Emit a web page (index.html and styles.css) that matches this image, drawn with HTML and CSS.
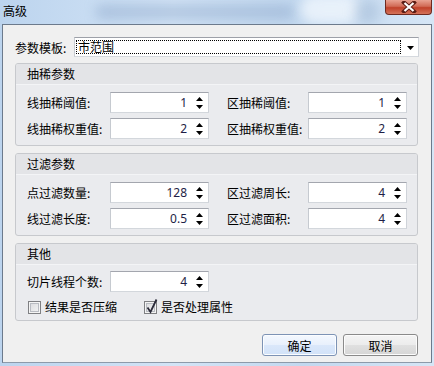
FILE: index.html
```html
<!DOCTYPE html>
<html lang="zh-CN">
<head>
  <meta charset="UTF-8" />
  <meta name="viewport" content="width=device-width, initial-scale=1.0">
  <title>高级</title>
  <link rel="stylesheet" href="styles.css">
</head>
<body>
  <div class="frame">
    <div class="titlebar">
      <span class="blur blur-a"></span>
      <span class="blur blur-b"></span>
      <span class="blur blur-c"></span>
      <span class="title">高级</span>
      <span class="close">
        <svg width="16" height="12" viewBox="0 0 16 12">
          <path d="M3 1.5 L13 10.5 M13 1.5 L3 10.5" stroke="#5a1c14" stroke-width="4" stroke-linecap="square"/>
          <path d="M3.5 2 L12.5 10 M12.5 2 L3.5 10" stroke="#ffffff" stroke-width="2.2"/>
        </svg>
      </span>
    </div>

    <div class="client">
      <div class="template-row">
        <span class="label">参数模板:</span>
        <div class="combo">
          <span class="combo-text">市范围</span>
          <svg class="combo-arrow" width="7" height="4" viewBox="0 0 7 4"><path d="M0 0 H7 L3.5 4 Z" fill="#000"/></svg>
        </div>
      </div>

      <div class="group">
        <div class="group-head">抽稀参数</div>
        <div class="group-body">
          <div class="row">
            <span class="label">线抽稀阈值:</span>
            <div class="spin"><span class="val">1</span><span class="arrows"></span></div>
            <span class="label right">区抽稀阈值:</span>
            <div class="spin"><span class="val">1</span><span class="arrows"></span></div>
          </div>
          <div class="row">
            <span class="label">线抽稀权重值:</span>
            <div class="spin"><span class="val">2</span><span class="arrows"></span></div>
            <span class="label right">区抽稀权重值:</span>
            <div class="spin"><span class="val">2</span><span class="arrows"></span></div>
          </div>
        </div>
      </div>

      <div class="group">
        <div class="group-head">过滤参数</div>
        <div class="group-body">
          <div class="row">
            <span class="label">点过滤数量:</span>
            <div class="spin"><span class="val">128</span><span class="arrows"></span></div>
            <span class="label right">区过滤周长:</span>
            <div class="spin"><span class="val">4</span><span class="arrows"></span></div>
          </div>
          <div class="row">
            <span class="label">线过滤长度:</span>
            <div class="spin"><span class="val">0.5</span><span class="arrows"></span></div>
            <span class="label right">区过滤面积:</span>
            <div class="spin"><span class="val">4</span><span class="arrows"></span></div>
          </div>
        </div>
      </div>

      <div class="group">
        <div class="group-head">其他</div>
        <div class="group-body other">
          <div class="row">
            <span class="label">切片线程个数:</span>
            <div class="spin"><span class="val">4</span><span class="arrows"></span></div>
          </div>
          <div class="checks">
            <label class="check"><span class="box"></span>结果是否压缩</label>
            <label class="check second"><span class="box checked">
              <svg width="13" height="15" viewBox="0 0 13 15"><path d="M2.5 8.5 L5.5 13 L11.5 0.5" fill="none" stroke="#2b2b3a" stroke-width="1.8"/></svg>
            </span>是否处理属性</label>
          </div>
        </div>
      </div>

      <div class="buttons">
        <button class="btn default">确定</button>
        <button class="btn">取消</button>
      </div>
    </div>
  </div>
</body>
</html>
```

FILE: styles.css
```css
html, body { margin: 0; padding: 0; }
body { width: 434px; height: 366px; overflow: hidden; font-family: "Noto Sans CJK SC", "Noto Sans", sans-serif; font-size: 12px; color: #000; background: #c6dbf1; }

.frame { height: 366px; background: linear-gradient(to right, #bcd4ee, #d3e4f6 40%, #c2d8ef 70%, #d6e6f6); }

.titlebar { position: relative; height: 24px; overflow: hidden; }
.title { position: absolute; left: 3px; top: 3px; line-height: 16px; font-size: 12px; }
.blur { position: absolute; border-radius: 10px; filter: blur(6px); }
.blur-a { left: 95px; top: 4px; width: 200px; height: 16px; background: rgba(120, 150, 190, 0.35); }
.blur-b { left: 300px; top: -6px; width: 60px; height: 30px; background: rgba(240, 246, 252, 0.8); border-radius: 30px; }
.blur-c { left: 355px; top: 0; width: 25px; height: 24px; background: rgba(150, 175, 205, 0.4); }
.close {
  position: absolute; left: 385px; top: 0; width: 47px; height: 15px; box-sizing: border-box;
  border: 1px solid #6e2a20; border-top: none; border-radius: 0 0 4px 4px;
  background: linear-gradient(#e9a393, #d16b56 45%, #c0412a 55%, #d4735a);
  display: flex; align-items: center; justify-content: center;
}

.client {
  margin: 0 2px; height: 339px; box-sizing: border-box;
  border: 1px solid #6c7a8c; border-bottom-color: #8c9aaa;
  background: #f0f0f0; padding: 12px 12px 0 12px;
}

.template-row { display: flex; align-items: center; height: 20px; }
.template-row .label { width: 59px; padding-left: 0; }
.combo {
  position: relative; width: 345px; height: 20px; box-sizing: border-box;
  border: 1px solid #a8abb2; border-color: #9da0a8 #d0d4da #d5d9de #c8ccd2; background: #fff;
}
.combo-text {
  position: absolute; left: 1px; top: 2px; width: 325px; height: 14px; box-sizing: border-box;
  border: 1px dotted #000; line-height: 12px; padding-left: 1px;
}
.combo-arrow { position: absolute; right: 4px; top: 8px; }

.group {
  margin-top: 6px; width: 403px; box-sizing: border-box;
  border: 1px solid #c7c9cd; border-radius: 3px; background: #eaebee;
}
.group + .group { margin-top: 7px; }
.group-head {
  height: 21px; line-height: 20px; padding-left: 11px; box-sizing: border-box;
  background: #e3e4e7; border-bottom: 1px solid #f3f4f6; border-radius: 2px 2px 0 0;
}
.group-body { padding: 7px 10px 6px 11px; display: flex; flex-direction: column; gap: 5px; }
.group-body.other { padding: 6px 10px 6px 11px; gap: 8px; }

.row { display: flex; align-items: center; height: 21px; }
.label { width: 83px; white-space: nowrap; }
.label.right { width: 81px; margin-left: 18px; }

.spin {
  display: flex; align-items: center; width: 99px; height: 21px; box-sizing: border-box;
  border: 1px solid #a9acb4; border-color: #a3a6ae #cfd3d9 #d3d7dc #c6cad0; background: #fff;
}
.val { flex: 1; text-align: right; font-family: "Noto Sans", sans-serif; color: #1e1e46; padding-right: 5px; line-height: 19px; }
.arrows {
  width: 14px; height: 19px; margin-right: 2px;
  background:
    no-repeat center 4px / 7px 4px url("data:image/svg+xml;utf8,<svg xmlns='http://www.w3.org/2000/svg' width='7' height='4'><path d='M3.5 0 L7 4 H0 Z' fill='black'/></svg>"),
    no-repeat center 12px / 7px 4px url("data:image/svg+xml;utf8,<svg xmlns='http://www.w3.org/2000/svg' width='7' height='4'><path d='M0 0 H7 L3.5 4 Z' fill='black'/></svg>");
}

.checks { display: flex; align-items: center; height: 14px; padding-left: 1px; }
.check { display: flex; align-items: center; gap: 4px; line-height: 14px; }
.check.second { margin-left: 27px; }
.box {
  position: relative; width: 13px; height: 13px; box-sizing: border-box;
  border: 1px solid #7f8083; background: linear-gradient(135deg, #d8d9dc, #f6f6f6);
  box-shadow: inset 0 0 0 1px #f4f4f4, inset 0 0 0 2px #b9bcc2;
}
.box svg { position: absolute; left: 0; top: -3px; }

.buttons { display: flex; justify-content: flex-end; gap: 6px; margin-top: 13px; width: 403px; }
.btn {
  width: 75px; height: 22px; box-sizing: border-box; padding: 0;
  font-family: "Noto Sans CJK SC", sans-serif; font-size: 12px; color: #000;
  border: 1px solid #8a8a8a; border-radius: 3px;
  background: linear-gradient(#f4f4f4, #ececec 50%, #e0e0e0 51%, #d6d6d6);
  box-shadow: inset 0 0 0 1px #fcfcfc;
}
.btn.default {
  border-color: #7d93b5;
  background: linear-gradient(#f4f8fe, #e8f0fc 50%, #dae7fa 51%, #d2e2f8);
  box-shadow: inset 0 0 0 1px #fbfdff;
}
```
